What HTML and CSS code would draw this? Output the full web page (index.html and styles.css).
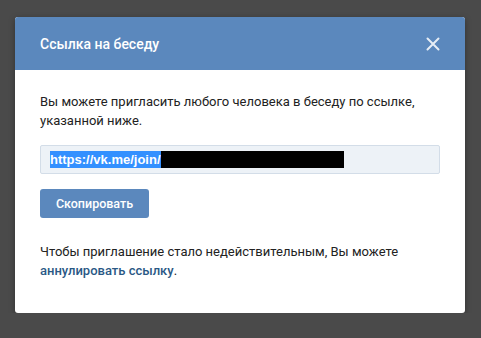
FILE: index.html
```html
<!DOCTYPE html>
<html lang="ru">
<head>
    <meta charset="UTF-8">
    <title>Ссылка на беседу</title>
    <link rel="stylesheet" href="styles.css">
</head>
<body>
    <div class="modal">
        <div class="modal-header">
            <h2>Ссылка на беседу</h2>
            <span class="close">
                <svg width="14" height="14" viewBox="0 0 14 14"><path d="M1.5 1.5l11 11M12.5 1.5l-11 11" stroke="#fff" stroke-width="2" stroke-linecap="round"/></svg>
            </span>
        </div>
        <div class="modal-body">
            <p class="info">Вы можете пригласить любого человека в беседу по ссылке, указанной ниже.</p>
            <div class="link-box">
                <span class="selected">https://vk.me/join/</span><span class="hidden-part"></span>
            </div>
            <button class="copy-btn">Скопировать</button>
            <p class="info revoke">Чтобы приглашение стало недействительным, Вы можете <a href="#">аннулировать ссылку</a>.</p>
        </div>
    </div>
</body>
</html>
```

FILE: styles.css
```css
* {
    margin: 0;
    padding: 0;
    box-sizing: border-box;
}

body {
    background-color: #4a4a4a;
    font-family: Roboto, "Open Sans", Arial, sans-serif;
    font-size: 13px;
    color: #222;
    padding: 17px 16px 0 15px;
}

.modal {
    width: 450px;
    height: 296px;
    background-color: #fff;
    border-radius: 3px;
    overflow: hidden;
    box-shadow: 0 2px 6px rgba(0, 0, 0, 0.35);
}

.modal-header {
    height: 53px;
    background-color: #5b88bd;
    display: flex;
    align-items: center;
    justify-content: space-between;
    padding: 0 25px 0 25px;
}

.modal-header h2 {
    font-size: 14px;
    font-weight: 500;
    color: #fff;
    margin-top: 1px;
}

.close {
    display: flex;
    margin-top: 1px;
    opacity: 0.85;
}

.modal-body {
    padding: 22px 25px 0 25px;
}

.info {
    line-height: 19px;
    color: #222;
}

.link-box {
    margin-top: 15px;
    height: 29px;
    background-color: #edf2f7;
    border: 1px solid #d3dde8;
    border-radius: 2px;
    display: flex;
    align-items: center;
    padding-left: 9px;
}

.selected {
    background-color: #3390ff;
    color: #fff;
    font-weight: 700;
    font-family: "Liberation Sans", Arial, sans-serif;
    font-size: 13px;
    line-height: 17px;
    height: 17px;
}

.hidden-part {
    display: inline-block;
    width: 183px;
    height: 17px;
    background-color: #000;
}

.copy-btn {
    margin-top: 15px;
    width: 109px;
    height: 29px;
    background-color: #5b88bd;
    color: #fff;
    border: none;
    border-radius: 3px;
    font-family: Roboto, Arial, sans-serif;
    font-weight: 500;
    font-size: 12.5px;
    padding-bottom: 1px;
}

.revoke {
    margin-top: 24px;
}

.revoke a {
    color: #2a5885;
    text-decoration: none;
    font-weight: 500;
}
```
